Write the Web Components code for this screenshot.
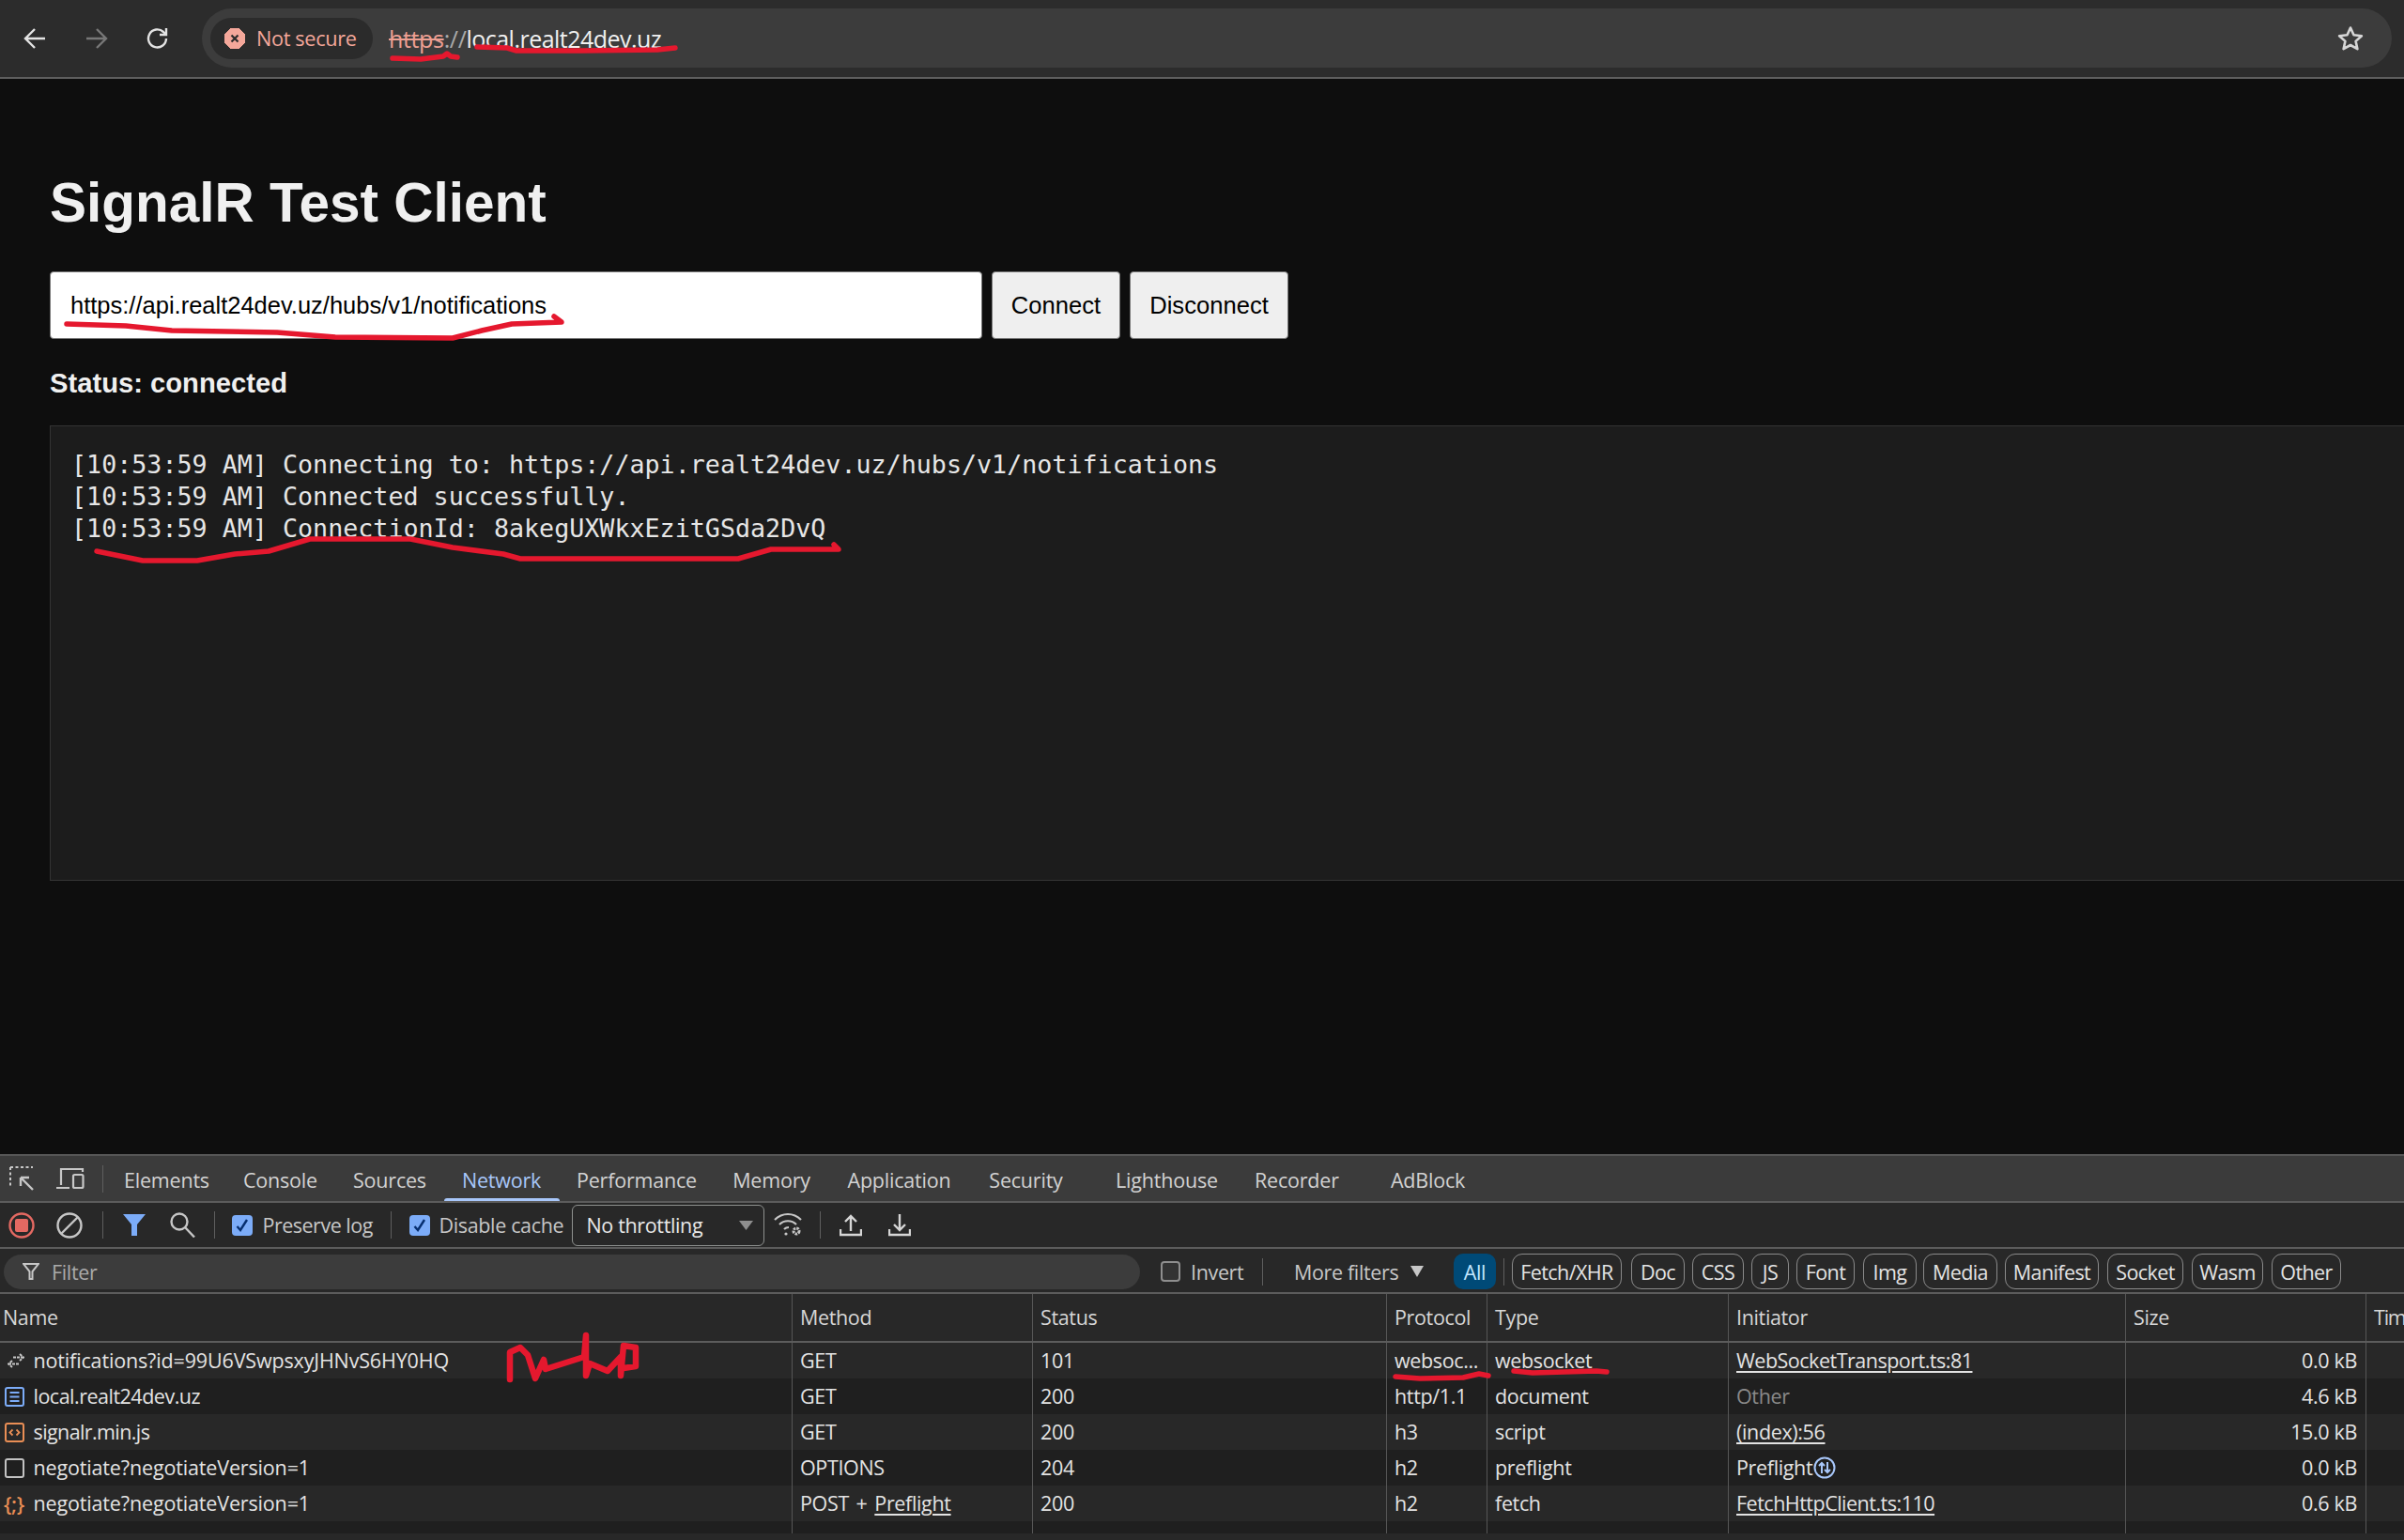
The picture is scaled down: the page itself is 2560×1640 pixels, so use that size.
<!doctype html>
<html lang="en"><head><meta charset="utf-8"><title>SignalR Test Client</title>
<style>
html,body{margin:0;padding:0;background:#0e0e0e}
body{position:relative;width:2560px;height:1640px;overflow:hidden;display:flex;flex-direction:column;
 --ui:"Open Sans","Noto Sans",sans-serif;font-family:var(--ui);color:#e3e3e3}
u{text-underline-offset:3px;text-decoration-thickness:2px}
.muted{color:#8a8a8a}
.tight{letter-spacing:-.5px}
</style></head><body>
<browser-bar url-scheme="https" url-host="local.realt24dev.uz"></browser-bar>
<test-client>
  <span slot="url">https://api.realt24dev.uz/hubs/v1/notifications</span>
  <log-line>[10:53:59 AM] Connecting to: https://api.realt24dev.uz/hubs/v1/notifications</log-line>
  <log-line>[10:53:59 AM] Connected successfully.</log-line>
  <log-line>[10:53:59 AM] ConnectionId: 8akegUXWkxEzitGSda2DvQ</log-line>
</test-client>
<dev-tools>
  <net-row head name="Name"><span slot="method">Method</span><span slot="status">Status</span><span slot="protocol">Protocol</span><span slot="type">Type</span><span slot="initiator">Initiator</span><span slot="size">Size</span><span slot="time" style="letter-spacing:-1.2px">Tim</span></net-row>
  <net-row icon="ws" name="notifications?id=99U6VSwpsxyJHNvS6HY0HQ"><span slot="method">GET</span><span slot="status">101</span><span slot="protocol">websoc...</span><span slot="type">websocket</span><u slot="initiator" class="tight">WebSocketTransport.ts:81</u><span slot="size">0.0 kB</span></net-row>
  <net-row dark icon="doc" ls="-.5px" name="local.realt24dev.uz"><span slot="method">GET</span><span slot="status">200</span><span slot="protocol">http/1.1</span><span slot="type">document</span><span slot="initiator" class="muted">Other</span><span slot="size">4.6 kB</span></net-row>
  <net-row icon="script" ls="-.6px" name="signalr.min.js"><span slot="method">GET</span><span slot="status">200</span><span slot="protocol">h3</span><span slot="type">script</span><u slot="initiator">(index):56</u><span slot="size">15.0 kB</span></net-row>
  <net-row dark icon="blank" name="negotiate?negotiateVersion=1"><span slot="method">OPTIONS</span><span slot="status">204</span><span slot="protocol">h2</span><span slot="type">preflight</span><span slot="initiator" style="display:inline-flex;align-items:center">Preflight<svg width="24" height="24" viewBox="0 0 24 24" fill="none" stroke="#a8c7fa" stroke-width="2" style="margin-left:1px"><circle cx="12" cy="12" r="10.5"/><path d="M9 18V7M6 10l3-3 3 3M15 6v11M12 14l3 3 3-3"/></svg></span><span slot="size">0.0 kB</span></net-row>
  <net-row icon="fetch" name="negotiate?negotiateVersion=1"><span slot="method" style="word-spacing:2.5px">POST + <u>Preflight</u></span><span slot="status">200</span><span slot="protocol">h2</span><span slot="type">fetch</span><u slot="initiator" class="tight">FetchHttpClient.ts:110</u><span slot="size">0.6 kB</span></net-row>
  <net-row dark filler></net-row>
</dev-tools>
<ink-marks></ink-marks>
<script>
const def=(name,html)=>{customElements.define(name,class extends HTMLElement{
  constructor(){super();this.attachShadow({mode:'open'}).innerHTML=typeof html==='function'?'':html}
  connectedCallback(){ if(typeof html==='function'&&!this._r){this._r=1;this.shadowRoot.innerHTML=html(this)} }
})};

def('browser-bar',el=>`<style>
:host{display:flex;flex:none;height:82px;background:#2c2c2c;border-bottom:2px solid #5e5e5e;align-items:flex-start;box-sizing:content-box}
svg{flex:none;display:block}
.nav{margin-top:29px}
.pill{margin:9px 0 0 35px;width:2332px;height:63px;border-radius:32px;background:#3c3c3c;display:flex;align-items:center;padding-left:9px;box-sizing:border-box}
.chip{width:173px;height:44px;border-radius:22px;background:#2b2b2b;display:flex;align-items:center;padding-left:15px;box-sizing:border-box;color:#f4a79a;font:21.7px var(--ui);letter-spacing:-.35px;white-space:nowrap}
.chip svg{margin-right:12px}
.url{margin-left:17px;font:25px var(--ui);letter-spacing:-.35px;color:#f0f0f0;white-space:nowrap;flex:1}
.s{color:#ed9f92;text-decoration:line-through;text-decoration-thickness:2px}
.d{color:#a9a9a9}
.h{letter-spacing:-.52px}
</style>
<svg class="nav" style="margin-left:25px" width="24" height="24" viewBox="0 0 24 24" fill="none" stroke="#e3e3e3" stroke-width="2.4"><path d="M23 12H2M12 2 2 12l10 10"/></svg>
<svg class="nav" style="margin-left:42px" width="24" height="24" viewBox="0 0 24 24" fill="none" stroke="#777" stroke-width="2.4"><path d="M1 12h21M12 2l10 10-10 10"/></svg>
<svg class="nav" style="margin-left:41px" width="24" height="24" viewBox="0 0 24 24" fill="none" stroke="#e3e3e3" stroke-width="2.4"><path d="M21 12a9.5 9.5 0 1 1-3-7L21 8M21 1v7h-7"/></svg>
<div class="pill"><div class="chip"><svg width="22" height="22" viewBox="0 0 22 22"><path d="M7 0h8l7 7v8l-7 7H7l-7-7V7z" fill="#f4a79a" stroke="#f4a79a" stroke-linejoin="round" stroke-width="1"/><path d="M7.5 7.5l7 7M14.5 7.5l-7 7" stroke="#2b2b2b" stroke-width="2.2"/></svg>Not secure</div>
<div class="url"><span class="s">${el.getAttribute('url-scheme')}</span><span class="d">://</span><span class="h">${el.getAttribute('url-host')}</span></div>
<svg style="margin-right:30px" width="28" height="28" viewBox="0 0 28 28" fill="none" stroke="#d6d6d6" stroke-width="2.6" stroke-linejoin="round"><path d="M14 2.5l3.5 7.800 8.400.9-6.300 5.700 1.800 8.300L14 21l-7.400 4.200 1.800-8.300L2.100 11.200l8.400-.9z"/></svg></div>`);

def('test-client',`<style>
:host{display:flex;flex-direction:column;align-items:stretch;flex:none;height:1145px;box-sizing:border-box;padding:97px 0 0 53px;background:#0e0e0e;font-family:"Liberation Sans",Arial,sans-serif;color:#f0f0f0}
h1{margin:0 0 39px;font-size:58.5px;line-height:69px;font-weight:700;color:#f0f0f0}
.row{display:flex;gap:10px}
.input{width:993px;height:72px;box-sizing:border-box;background:#fff;border-radius:4px;border:1px solid #777;padding-left:21px;display:flex;align-items:center;color:#000;font-size:25.5px}
button{height:72px;box-sizing:border-box;background:#efefef;border:1px solid #777;border-radius:4px;color:#000;font:25.6px "Liberation Sans",Arial,sans-serif;padding:0;margin:0}
.st{margin:31px 0 29px;font-size:29.2px;line-height:32px;font-weight:700}
.log{height:485px;box-sizing:border-box;background:#1c1c1c;border:1px solid #333;border-right:0;padding:24px 0 0 22px;color:#e6e6e6}
</style><h1>SignalR Test Client</h1>
<div class="row"><div class="input"><slot name="url"></slot></div><button style="width:137px">Connect</button><button style="width:169px">Disconnect</button></div>
<div class="st">Status: connected</div>
<div class="log"><slot></slot></div>`);

def('log-line',`<style>:host{display:block;font:26.7px/34px "DejaVu Sans Mono","Liberation Mono",monospace;white-space:pre}</style><slot></slot>`);

const tabs=[['Elements',132,89],['Console',259,79],['Sources',376,77],['Network',492,84],['Performance',614,126],['Memory',779,85],['Application',901,113],['Security',1053,79],['Lighthouse',1188,109],['Recorder',1336,88],['AdBlock',1480,81]];
const chips=[['Fetch/XHR',1610,1727],['Doc',1737,1794],['CSS',1802,1857],['JS',1865,1905],['Font',1913,1975],['Img',1984,2041],['Media',2048,2127],['Manifest',2135,2235],['Socket',2244,2325],['Wasm',2334,2410],['Other',2419,2493]];
def('dev-tools',()=>{
 let x=110, th='';
 for(const[t,l,w]of tabs){th+=`<span class="tab${t==='Network'?' on':''}" style="margin-left:${l-x}px;width:${w}px">${t}</span>`;x=l+w}
 let cx=1603, ch='';
 for(const[t,a,b]of chips){ch+=`<span class="fc" style="margin-left:${a-cx}px;width:${b-a}px">${t}</span>`;cx=b}
 return `<style>
:host{display:flex;flex-direction:column;flex:none;height:411px;background:#282828;border-top:2px solid #565656;box-sizing:border-box;font:21.5px var(--ui);letter-spacing:-.35px;color:#e3e3e3;overflow:hidden}
svg{display:block;flex:none}
.bar{display:flex;align-items:center;flex:none;box-sizing:border-box;white-space:nowrap}
.tabs{height:50px;background:#3b3b3b;border-bottom:2px solid #5c5c5c}
.tab{position:relative;flex:none;text-align:center;color:#d2d2d2;height:48px;line-height:52px;letter-spacing:-.2px}
.tab.on{color:#a8c7fa}
.tab.on::after{content:"";position:absolute;left:-19px;right:-20px;bottom:0;height:3px;background:#a8c7fa;border-radius:3px 3px 0 0}
.sep{flex:none;width:1px;height:29px;background:#5e5e5e}
.tools{height:49px;border-bottom:2px solid #5c5c5c}
.cb{flex:none;width:22px;height:22px;border-radius:4px;background:#7cacf8;display:flex;align-items:center;justify-content:center}
.lbl{flex:none;color:#c7c7c7}
.sel{flex:none;box-sizing:border-box;width:205px;height:44px;border:1.5px solid #8e918f;border-radius:6px;display:flex;align-items:center;padding-left:15px;color:#e8e8e8;justify-content:space-between;padding-right:11px}
.filters{height:48px;border-bottom:2px solid #5c5c5c;padding-top:2px}
.inp{flex:none;width:1210px;height:37px;border-radius:19px;background:#3c3c3c;display:flex;align-items:center;color:#aaa}
.ck{flex:none;width:21px;height:22px;box-sizing:border-box;border:2px solid #8e8e8e;border-radius:4px;background:#333}
.all{flex:none;width:45px;height:38px;border-radius:10px;background:#004a77;color:#c2e7ff;text-align:center;line-height:40px}
.fc{flex:none;box-sizing:border-box;height:38px;border:1.5px solid #8a8a8a;border-radius:11px;text-align:center;line-height:38px;color:#e3e3e3;letter-spacing:-.6px}
</style>
<div class="bar tabs">
<svg style="margin-left:10px" width="27" height="26" viewBox="0 0 27 26" fill="none" stroke="#c7c7c7" stroke-width="2"><path d="M1 1h24M1 1v21" stroke-dasharray="3 2.5"/><path d="M25 25 12 12M12 12v9M12 12h9" stroke-width="2.4"/></svg>
<svg style="margin-left:23px" width="30" height="24" viewBox="0 0 30 24" fill="none" stroke="#c7c7c7" stroke-width="2.2"><path d="M5 19V2h23v3M0 22h14"/><rect x="18" y="8" width="10.5" height="14" rx="1.5"/></svg>
<span class="sep" style="margin-left:19px"></span>
${th}
</div>
<div class="bar tools">
<svg style="margin-left:9px" width="28" height="28" viewBox="0 0 28 28"><circle cx="14" cy="14" r="12.5" fill="none" stroke="#e46962" stroke-width="2.4"/><rect x="7" y="7" width="14" height="14" rx="2" fill="#e46962"/></svg>
<svg style="margin-left:23px" width="28" height="28" viewBox="0 0 28 28" fill="none" stroke="#c7c7c7" stroke-width="2.4"><circle cx="14" cy="14" r="12.5"/><path d="M5 23 23 5"/></svg>
<span class="sep" style="margin-left:21px"></span>
<svg style="margin-left:21px" width="24" height="23" viewBox="0 0 24 23"><path d="M0 0h24l-9 11v12H9V11z" fill="#7cacf8"/></svg>
<svg style="margin-left:25px" width="28" height="27" viewBox="0 0 28 27" fill="none" stroke="#c7c7c7" stroke-width="2.4"><circle cx="11" cy="10" r="8.5"/><path d="M17 16l10 10.5"/></svg>
<span class="sep" style="margin-left:20px"></span>
<span class="cb" style="margin-left:18px"><svg width="14" height="14" viewBox="0 0 14 14" fill="none" stroke="#062e6f" stroke-width="2.4"><path d="M1.5 8l3.500 4L12 1"/></svg></span>
<span class="lbl" style="margin-left:10.5px;width:118.5px;letter-spacing:-.5px">Preserve log</span>
<span class="sep" style="margin-left:18px"></span>
<span class="cb" style="margin-left:19px"><svg width="14" height="14" viewBox="0 0 14 14" fill="none" stroke="#062e6f" stroke-width="2.4"><path d="M1.5 8l3.500 4L12 1"/></svg></span>
<span class="lbl" style="margin-left:9.5px;width:132.5px">Disable cache</span>
<span class="sel" style="margin-left:8.5px">No throttling<svg width="15" height="10" viewBox="0 0 15 10"><path d="M0 0h15l-7.5 10z" fill="#8e8e8e"/></svg></span>
<svg style="margin-left:10.5px" width="31" height="27" viewBox="0 0 31 27" fill="none" stroke="#c7c7c7" stroke-width="2.2"><path d="M1 8c8-8 20-8 28 0M6 13c5-5 13-5 18 0M11 18c2-2 4-2 5-2"/><circle cx="13" cy="23" r="1.6" fill="#c7c7c7" stroke="none"/><circle cx="24" cy="20" r="3" stroke-dasharray="2.5 1" stroke-width="3"/></svg>
<span class="sep" style="margin-left:18px"></span>
<svg style="margin-left:20px" width="24" height="24" viewBox="0 0 24 24" fill="none" stroke="#d6d6d6" stroke-width="2.4"><path d="M12 18V2M6 8l6-6 6 6M1 16v6h22v-6"/></svg>
<svg style="margin-left:28px" width="24" height="24" viewBox="0 0 24 24" fill="none" stroke="#d6d6d6" stroke-width="2.4"><path d="M12 0v17M6 11l6 6 6-6M1 16v6h22v-6"/></svg>
</div>
<div class="bar filters">
<span class="inp" style="margin-left:4px"><svg style="margin:0 13px 0 20px" width="18" height="18" viewBox="0 0 18 18" fill="none" stroke="#c7c7c7" stroke-width="2"><path d="M1 1h16l-6.5 8v8h-3V9z"/></svg>Filter</span>
<span class="ck" style="margin-left:22px"></span>
<span class="lbl" style="margin-left:11px;width:56px">Invert</span>
<span class="sep" style="margin-left:20px"></span>
<span class="lbl" style="margin-left:33px;width:111px">More filters</span>
<svg style="margin-left:13px" width="14" height="12" viewBox="0 0 14 12"><path d="M0 0h14l-7 12z" fill="#c7c7c7"/></svg>
<span class="all" style="margin-left:32px">All</span>
<span class="sep" style="margin-left:8px"></span>
<span style="width:1px;flex:none"></span>
${ch}
</div>
<slot></slot>`});

const box=(c,inner='')=>`<svg width="21" height="21" viewBox="0 0 21 21" fill="none" stroke="${c}" stroke-width="2"><rect x="1" y="1" width="19" height="19" rx="2"/>${inner}</svg>`;
const rowIcons={
 ws:`<svg style="margin-left:3px" width="18" height="16" viewBox="0 0 18 16" fill="none" stroke="#c7c7c7" stroke-width="2"><path d="M6 4.5h11M13 1l4 3.5-4 3.500" stroke-dasharray="3 1"/><path d="M12 11.5H1M5 8l-4 3.500L5 15" stroke-dasharray="3 1"/></svg>`,
 doc:box('#7cacf8','<path d="M5.5 6h10M5.5 10.5h10M5.5 15h10"/>'),
 script:box('#e98e55','<path d="M8.5 7.5l-3 3 3 3M12.500 7.500l3 3-3 3" stroke-width="1.8"/>'),
 blank:box('#c2c2c2'),
 fetch:`<span style="display:block;margin-left:-1px;width:25px;font:500 22px/24px 'Noto Sans',sans-serif;letter-spacing:-.4px;color:#e98e55;white-space:nowrap">{;}</span>`};
def('net-row',el=>{
 const a=n=>el.getAttribute(n), head=el.hasAttribute('head'), fill=el.hasAttribute('filler');
 return `<style>
:host{display:grid;grid-template-columns:844px 256px 377px 107px 257px 423px 256px 40px;flex:none;height:${head?52:fill?13:38}px;box-sizing:border-box;
 background:${el.hasAttribute('dark')?'#1f1f1f':'#282828'};${head?'border-bottom:2px solid #5c5c5c;':''}white-space:nowrap;color:${head?'#d6d6d6':'#e3e3e3'}}
.c{box-sizing:border-box;border-right:1.5px solid #565656;padding-left:8px;display:flex;align-items:center;overflow:hidden;line-height:36px;height:100%}
.n{padding-left:3px;${head?'':`letter-spacing:${a('ls')||'-.15px'};`}}
.ic{width:31px;flex:none;display:flex;align-items:center;padding-left:2px;box-sizing:border-box;margin-right:1.5px}
.z{justify-content:flex-end;padding-right:9px}
.t{border-right:0;padding-right:0}
</style>
<div class="c n">${!head&&!fill?`<span class="ic">${rowIcons[a('icon')]}</span>`:''}${a('name')||''}</div>
<div class="c"><slot name="method"></slot></div><div class="c"><slot name="status"></slot></div><div class="c" style="padding-right:0"><slot name="protocol"></slot></div><div class="c"><slot name="type"></slot></div><div class="c"><slot name="initiator"></slot></div><div class="c ${head?'':'z'}"><slot name="size"></slot></div><div class="c t"><slot name="time"></slot></div>`});

def('ink-marks',`<style>:host{position:absolute;left:0;top:0;width:2560px;height:1640px;pointer-events:none;display:block}svg{display:block}</style>
<svg width="2560" height="1640" fill="none" stroke="#e5182e" stroke-width="5.5" stroke-linecap="round" stroke-linejoin="round">
<path d="M418 62l30 1 24-3 4-3 4 3 7 1"/>
<path d="M508 50l32 1 10 3 70 0 80-1 19-2"/>
<path d="M71 345l63 2 49 5 112 2 62 5 125 1 31-8 32-7 53-2-8-6"/>
<path d="M103 587l49 10 58 0 40-7 36-3 44-13 107 0 45 9 54 7 18 5 232 0 35-10 72 0-5-5"/>
<path stroke-width="6.5" d="M543 1469 543 1440 554 1435 562 1443 570 1468 579 1448 581 1458 622 1445 624 1422 624 1465 628 1452 647 1460 661 1445 661 1465 664 1433 677 1435 677 1455 664 1457"/>
<path d="M1486 1466l26 2 46-1 17-4 10 2"/>
<path d="M1612 1460l20 2 68-2 11 1"/>
</svg>`);
</script>
</body></html>
